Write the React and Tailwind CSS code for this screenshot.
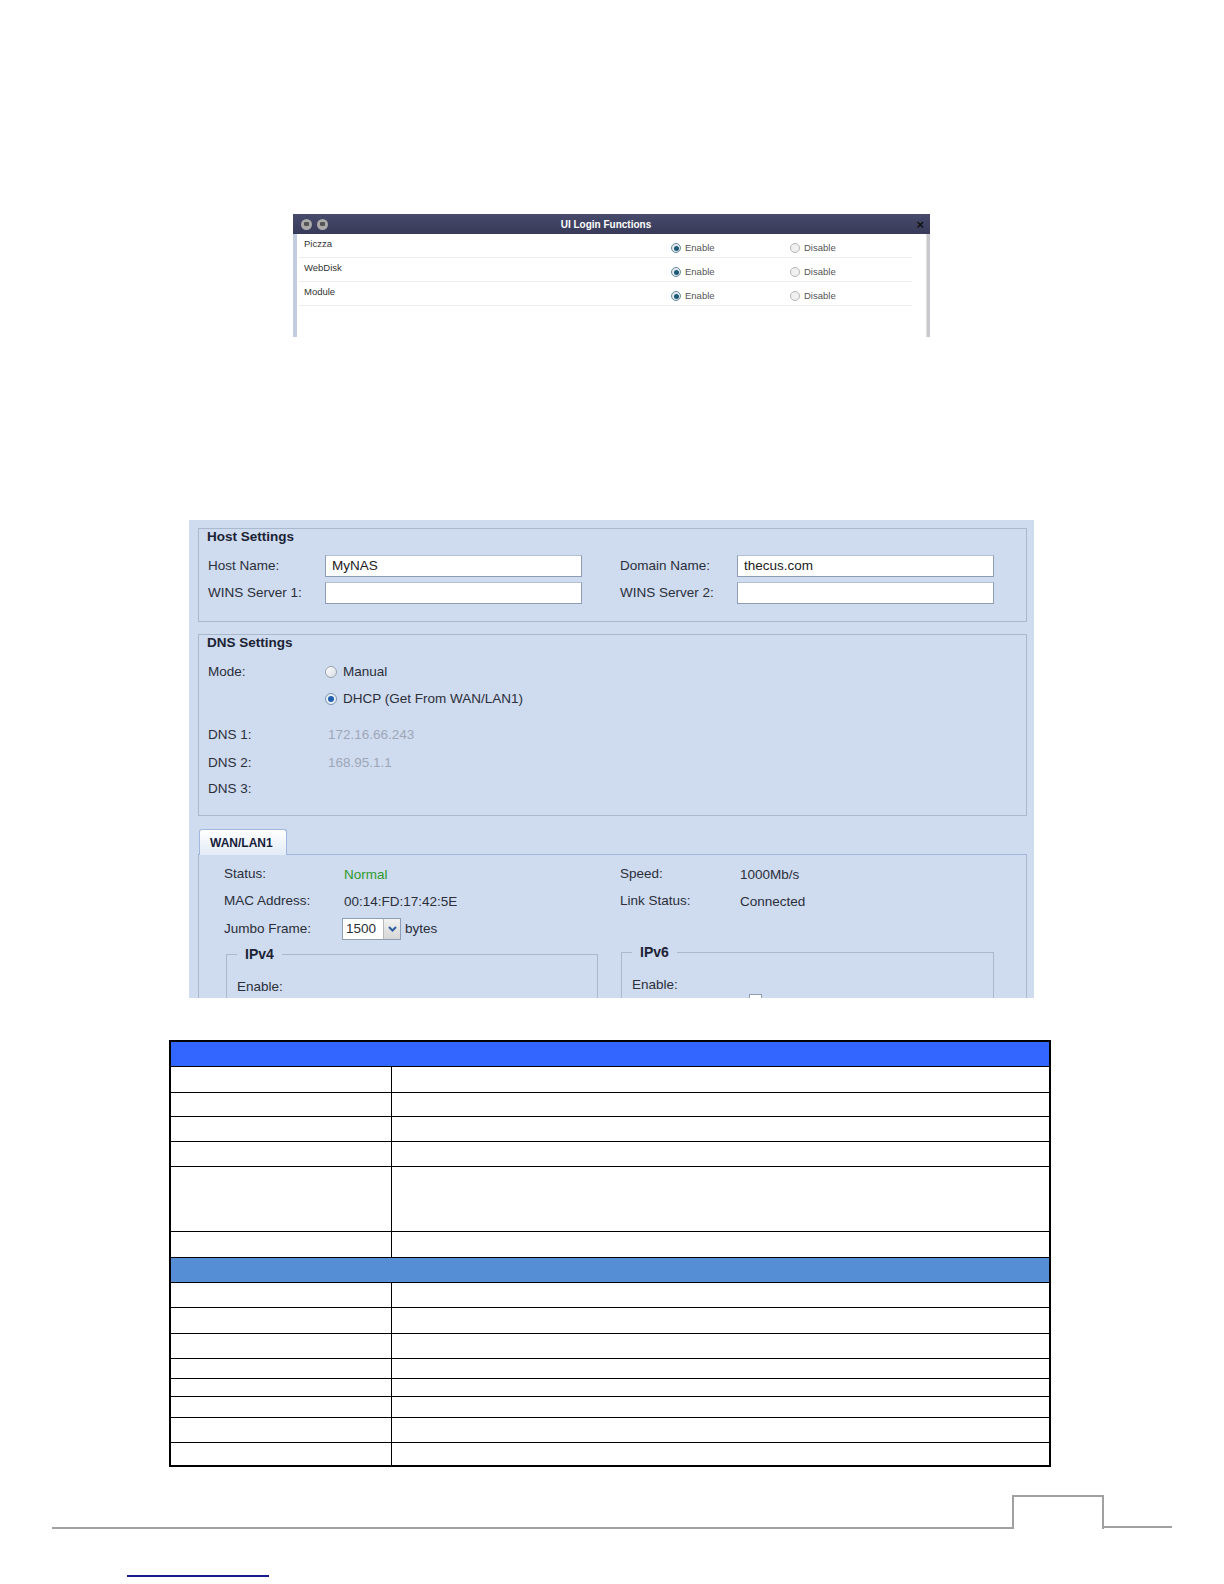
import React from "react";

const ui = { fontFamily: '"Liberation Sans", Arial, sans-serif' };

const DlgRadio = ({ checked }) => (
  <span
    className={
      "inline-flex items-center justify-center w-[10px] h-[10px] rounded-full border " +
      (checked ? "border-[#6b8a9a] bg-[#dfe9ee]" : "border-[#b5b5b5] bg-[#f0f0f0]")
    }
  >
    {checked && <span className="w-[5px] h-[5px] rounded-full bg-[#1e5a78]" />}
  </span>
);

const NasRadio = ({ checked }) => (
  <span
    className={
      "inline-flex items-center justify-center w-[12px] h-[12px] rounded-full border " +
      (checked ? "border-[#7d93b0] bg-[#e8eef6]" : "border-[#9aa3ae] bg-gradient-to-br from-white to-[#d8dde4]")
    }
  >
    {checked && <span className="w-[6px] h-[6px] rounded-full bg-[#1f5fae]" />}
  </span>
);

const loginRows = ["Piczza", "WebDisk", "Module"];

function LoginDialog() {
  return (
    <div className="ml-[293px] w-[637px] h-[123px] flex flex-col bg-white text-[#333]" style={ui}>
      <div className="h-[20px] flex items-center bg-gradient-to-b from-[#474a6b] to-[#373a58]">
        <div className="w-[60px] flex items-center gap-[5px] pl-[8px]">
          <span className="w-[11px] h-[11px] rounded-full bg-[#a9a9a9] flex items-center justify-center">
            <span className="w-[5px] h-[4px] bg-[#555] rounded-[1px]" />
          </span>
          <span className="w-[11px] h-[11px] rounded-full bg-[#a9a9a9] flex items-center justify-center">
            <span className="w-[5px] h-[4px] bg-[#555] rounded-[1px]" />
          </span>
        </div>
        <div className="flex-1 text-center pr-[11px] text-white text-[10px] font-bold">UI Login Functions</div>
        <div className="w-[60px] text-right pr-[6px] text-[13px] font-bold text-[#111] leading-none">×</div>
      </div>
      <div className="flex-1 flex border-l-[4px] border-[#c3cde0] border-r-[3px] border-r-[#c8c8cc]">
        <div className="w-[615px] pl-[2px]">
          {loginRows.map((r) => (
            <div key={r} className="h-[24px] flex border-b border-[#ececec] text-[9.5px]">
              <div className="w-[372px] pl-[5px] pt-[3px]">{r}</div>
              <div className="w-[119px] flex items-center gap-[4px] pt-[5px]">
                <DlgRadio checked />
                <span className="text-[#555]">Enable</span>
              </div>
              <div className="flex items-center gap-[4px] pt-[5px]">
                <DlgRadio />
                <span className="text-[#555]">Disable</span>
              </div>
            </div>
          ))}
        </div>
        <div className="flex-1 border-r border-[#e2e2e2]" />
      </div>
    </div>
  );
}

const Input = ({ value }) => (
  <div className="w-[257px] h-[22px] bg-white border border-[#8e9db3] border-t-[#b4bfd0] flex items-center pl-[6px] text-[#222]">
    {value}
  </div>
);

function NasPanel() {
  return (
    <div
      className="ml-[189px] mt-[183px] w-[845px] h-[478px] overflow-hidden bg-[#cfdbef] pt-[8px] pl-[9px] text-[13.5px] text-[#2a2f3a]"
      style={ui}
    >
      <div className="w-[829px] h-[94px] border border-[#aab8cd]">
        <div className="h-[16px] pl-[8px] font-bold text-[#1b2335] leading-[16px]">Host Settings</div>
        <div className="mt-[10px] flex items-center h-[22px]">
          <div className="w-[126px] pl-[9px]">Host Name:</div>
          <Input value="MyNAS" />
          <div className="w-[117px] ml-[38px]">Domain Name:</div>
          <Input value="thecus.com" />
        </div>
        <div className="mt-[5px] flex items-center h-[22px]">
          <div className="w-[126px] pl-[9px]">WINS Server 1:</div>
          <Input value="" />
          <div className="w-[117px] ml-[38px]">WINS Server 2:</div>
          <Input value="" />
        </div>
      </div>

      <div className="mt-[12px] w-[829px] h-[182px] border border-[#aab8cd]">
        <div className="h-[16px] pl-[8px] font-bold text-[#1b2335] leading-[16px]">DNS Settings</div>
        <div className="mt-[11px] h-[20px] flex items-center">
          <div className="w-[126px] pl-[9px]">Mode:</div>
          <NasRadio />
          <span className="ml-[6px]">Manual</span>
        </div>
        <div className="mt-[7px] h-[20px] flex items-center">
          <div className="w-[126px] pl-[9px]" />
          <NasRadio checked />
          <span className="ml-[6px]">DHCP (Get From WAN/LAN1)</span>
        </div>
        <div className="mt-[16px] h-[20px] flex items-center">
          <div className="w-[129px] pl-[9px]">DNS 1:</div>
          <span className="text-[#9ea7b8]">172.16.66.243</span>
        </div>
        <div className="mt-[8px] h-[20px] flex items-center">
          <div className="w-[129px] pl-[9px]">DNS 2:</div>
          <span className="text-[#9ea7b8]">168.95.1.1</span>
        </div>
        <div className="mt-[6px] h-[20px] flex items-center">
          <div className="w-[129px] pl-[9px]">DNS 3:</div>
        </div>
      </div>

      <div className="mt-[13px] w-[829px] h-[26px] border-b border-[#9fb7dc] flex items-end">
        <div className="ml-[1px] w-[88px] h-[26px] -mb-px border border-b-0 border-[#9fb7dc] rounded-t-[3px] bg-gradient-to-b from-white to-[#e3ebf7] flex items-center pl-[10px] text-[12px] font-bold text-[#15203a]">
          WAN/LAN1
        </div>
      </div>
      <div className="w-[829px] h-[200px] border-x border-[#aab8cd] pl-[25px] pt-[9px]">
        <div className="flex">
          <div className="w-[396px]">
            <div className="h-[20px] flex items-center">
              <div className="w-[120px]">Status:</div>
              <span className="text-[#2e9a2e] mt-[2px]">Normal</span>
            </div>
            <div className="mt-[7px] h-[20px] flex items-center">
              <div className="w-[120px]">MAC Address:</div>
              <span className="mt-[2px]">00:14:FD:17:42:5E</span>
            </div>
            <div className="mt-[7px] h-[22px] flex items-center">
              <div className="w-[118px]">Jumbo Frame:</div>
              <div className="w-[59px] h-[22px] bg-white border border-[#8e9db3] flex">
                <span className="flex-1 flex items-center pl-[3px]">1500</span>
                <span className="w-[17px] bg-gradient-to-b from-[#f2f2f2] to-[#d6d6d6] border-l border-[#b8b8b8] flex items-center justify-center">
                  <svg width="9" height="6" viewBox="0 0 9 6">
                    <path d="M1 1 L4.5 4.5 L8 1" stroke="#2f5d9e" strokeWidth="2" fill="none" />
                  </svg>
                </span>
              </div>
              <span className="ml-[4px]">bytes</span>
            </div>
          </div>
          <div className="flex-1">
            <div className="h-[20px] flex items-center">
              <div className="w-[120px]">Speed:</div>
              <span className="mt-[2px]">1000Mb/s</span>
            </div>
            <div className="mt-[7px] h-[20px] flex items-center">
              <div className="w-[120px]">Link Status:</div>
              <span className="mt-[2px]">Connected</span>
            </div>
          </div>
        </div>
        <div className="mt-[4px] flex items-start">
          <fieldset className="ml-[2px] w-[372px] h-[80px] border border-[#aab8cd] px-[10px]">
            <legend className="px-[8px] text-[14px] font-bold text-[#1b2335]">IPv4</legend>
            <div className="pt-[12px]">Enable:</div>
          </fieldset>
          <fieldset className="ml-[23px] -mt-[2px] w-[373px] h-[80px] border border-[#aab8cd] px-[10px]">
            <legend className="px-[8px] text-[14px] font-bold text-[#1b2335]">IPv6</legend>
            <div className="pt-[12px]">Enable:</div>
            <div className="mt-[-1px] ml-[117px] w-[13px] h-[13px] border border-[#8e9db3] bg-white" />
          </fieldset>
        </div>
      </div>
    </div>
  );
}

const rowHeights = [26, 24, 25, 25, 65, 26];
const rowHeights2 = [25, 26, 25, 20, 18, 21, 25, 24];

function SpecTable() {
  return (
    <table className="ml-[169px] mt-[42px] w-[882px] border-collapse border-[2px] border-black">
      <tbody>
        <tr className="h-[25px]">
          <td colSpan={2} className="bg-[#3366ff] border-[1.5px] border-black" />
        </tr>
        {rowHeights.map((h, i) => (
          <tr key={"a" + i} style={{ height: h }}>
            <td className="w-[221px] border-[1.5px] border-black" />
            <td className="border-[1.5px] border-black" />
          </tr>
        ))}
        <tr className="h-[25px]">
          <td colSpan={2} className="bg-[#558ed5] border-[1.5px] border-black" />
        </tr>
        {rowHeights2.map((h, i) => (
          <tr key={"b" + i} style={{ height: h }}>
            <td className="w-[221px] border-[1.5px] border-black" />
            <td className="border-[1.5px] border-black" />
          </tr>
        ))}
      </tbody>
    </table>
  );
}

export default function App() {
  return (
    <div className="w-[1224px] h-[1584px] bg-white pt-[214px] overflow-hidden">
      <LoginDialog />
      <NasPanel />
      <SpecTable />
      <div className="mt-[28px] ml-[52px] flex items-end">
        <div className="w-[960px] border-b-2 border-[#a0a0a0]" />
        <div className="w-[92px] h-[34px] border-t-2 border-x-2 border-[#a0a0a0]" />
        <div className="w-[68px] border-b-2 border-[#a0a0a0] mb-[1px]" />
      </div>
      <div className="mt-[46px] ml-[127px] w-[142px] h-[2px] bg-[#1a1a8c]" />
    </div>
  );
}
